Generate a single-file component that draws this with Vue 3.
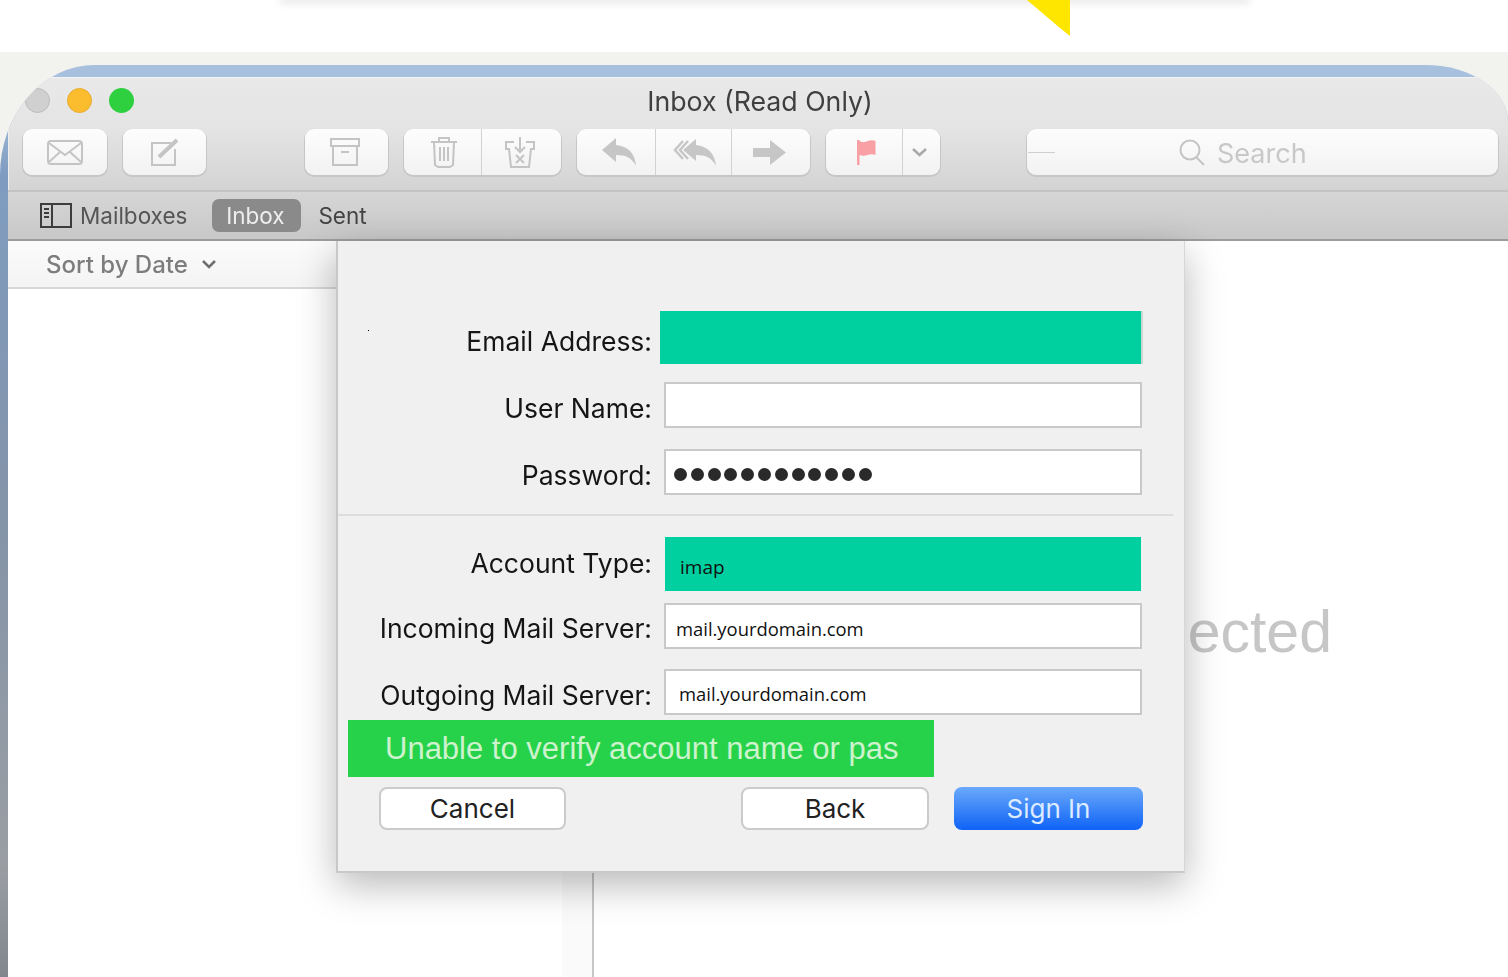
<script setup>
const dots = Array.from({ length: 12 }, (_, i) => i)
</script>

<template>
  <div class="page">
    <div class="top-gap"><div class="paper-edge"></div></div>
    <svg class="corner-mark" width="43" height="36" viewBox="0 0 43 36"><polygon points="0,0 43,0 43,36 33,28" /></svg>
    <div class="desk">
      <div class="window">
        <div class="chrome">
          <div class="titlebar">
            <div class="lights">
              <span class="light gray"></span>
              <span class="light amber"></span>
              <span class="light lime"></span>
            </div>
            <div class="title">Inbox (Read Only)</div>
          </div>
          <div class="toolbar">
            <div class="tool w84">
              <svg width="36" height="25" viewBox="0 0 36 25" class="ico"><rect x="1" y="1" width="34" height="23" rx="3" /><path d="M2 3l16 12L34 3M2 22l11-10M34 22L23 12" /></svg>
            </div>
            <div class="tool w83 ml16">
              <svg width="32" height="30" viewBox="0 0 32 30" class="ico"><path d="M22 6H3v22h23V12" /><path class="thick" d="M10 20L28 3" /></svg>
            </div>
            <div class="tool w83 ml99">
              <svg width="30" height="28" viewBox="0 0 30 28" class="ico shift-l3"><rect x="1" y="1" width="28" height="7" /><path d="M3 8v19h24V8M11 14h8" /></svg>
            </div>
            <div class="tool-group ml16">
              <div class="seg w78">
                <svg width="28" height="32" viewBox="0 0 28 32" class="ico shift-r2"><path d="M1 6h26M9 6V2h10v4M4 6l1 23 3 2h12l3-2 1-23M10 11v14M14 11v14M18 11v14" /></svg>
              </div>
              <div class="seg w79">
                <svg width="32" height="32" viewBox="0 0 32 32" class="ico shift-l3"><path d="M10 6H2v7h3l2 18h18l2-18h3V6h-8M16 1v15M11 11l5 5 5-5M12 19l8 8M20 19l-8 8" /></svg>
              </div>
            </div>
            <div class="tool-group ml16">
              <div class="seg w79">
                <svg width="34" height="28" viewBox="0 0 34 28" class="solid shift-r5"><path d="M0 12L14 0v7c12 1 19 8 20 21-4-8-10-11-20-11v7z" /></svg>
              </div>
              <div class="seg w76">
                <svg width="43" height="28" viewBox="0 0 43 28" class="solid shift-r2"><path d="M10 12L23 1v6c11 1 19 8 20 21-4-8-10-11-20-11v6z" /><path class="chev" d="M10 3L2 12l8 9M15 3l-8 9 8 9" /></svg>
              </div>
              <div class="seg w78">
                <svg width="33" height="25" viewBox="0 0 33 25" class="solid shift-l3"><path d="M0 8h17V0l16 12.500L17 25v-8H0z" /></svg>
              </div>
            </div>
            <div class="tool-group ml16">
              <div class="seg w77">
                <svg width="20" height="25" viewBox="0 0 20 25" class="flag shift-r5"><path d="M0 0h2.500v25H0zM2.500 1c4 2 6 1 8 0 3-1 6-1 8 0v14c-3-1-5-1-8 0-3 1-5 1-8 0z" /></svg>
              </div>
              <div class="seg w37">
                <svg width="15" height="9" viewBox="0 0 15 9" class="down shift-l3"><path d="M1 1l6.500 6L14 1" /></svg>
              </div>
            </div>
            <div class="search">
              <span class="search-dash"></span>
              <svg width="26" height="27" viewBox="0 0 26 27" class="ico search-ico"><circle cx="11" cy="11" r="9.500" /><path d="M17.500 18.500L25 26" /></svg>
              <span class="search-text">Search</span>
            </div>
          </div>
          <div class="tabbar">
            <svg width="32" height="25" viewBox="0 0 32 25" class="side-ico"><rect x="1" y="1" width="30" height="23" /><path d="M12 1v23M4 6h5M4 10h5M4 14h5" /></svg>
            <span class="tab mailboxes">Mailboxes</span>
            <span class="tab pill">Inbox</span>
            <span class="tab sent">Sent</span>
          </div>
        </div>
        <div class="content">
          <div class="list">
            <div class="sort">
              <span>Sort by Date</span>
              <svg width="16" height="10" viewBox="0 0 16 10"><path d="M2 2l6 6 6-6" /></svg>
            </div>
          </div>
          <div class="rail"></div>
          <div class="detail"><span class="empty">ected</span></div>
        </div>
      </div>
    </div>

    <div class="dialog">
      <span class="speck"></span>
      <div class="row first">
        <label class="label nudge">Email Address:</label>
        <div class="field teal email"></div>
      </div>
      <div class="row r18">
        <label class="label nudge">User Name:</label>
        <div class="field"></div>
      </div>
      <div class="row r21">
        <label class="label nudge">Password:</label>
        <div class="field dots">
          <span v-for="d in dots" :key="d" class="dot"></span>
        </div>
      </div>
      <div class="divider"></div>
      <div class="row account">
        <label class="label lift">Account Type:</label>
        <div class="field teal type"><span class="val imap">imap</span></div>
      </div>
      <div class="row r12">
        <label class="label slight">Incoming Mail Server:</label>
        <div class="field"><span class="val in">mail.yourdomain.com</span></div>
      </div>
      <div class="row r20">
        <label class="label nudge">Outgoing Mail Server:</label>
        <div class="field"><span class="val out">mail.yourdomain.com</span></div>
      </div>
      <div class="banner">Unable to verify account name or pas</div>
      <div class="actions">
        <button class="btn cancel">Cancel</button>
        <button class="btn back">Back</button>
        <button class="btn signin">Sign In</button>
      </div>
    </div>
  </div>
</template>

<style scoped>
.page {
  position: relative;
  width: 1508px;
  height: 977px;
  overflow: hidden;
  background: #fff;
  display: flex;
  flex-direction: column;
  font-family: Inter, "Liberation Sans", sans-serif;
}
.top-gap { height: 52px; flex: none; }
.paper-edge {
  width: 966px;
  height: 0;
  margin-left: 282px;
  box-shadow: 0 0 9px 2px rgba(0, 0, 0, 0.17);
}
.corner-mark { position: absolute; left: 1027px; top: 0; }
.corner-mark polygon { fill: #ffe600; }

.desk {
  flex: 1;
  display: flex;
  flex-direction: column;
  background: #f2f2ee;
  padding-top: 13px;
  min-height: 0;
}
.window {
  flex: 1;
  display: flex;
  flex-direction: column;
  min-height: 0;
  overflow: hidden;
  padding: 12px 0 0 8px;
  border-radius: 95px 83px 0 0 / 110px 57px 0 0;
  background: linear-gradient(180deg, #a6c0de 0, #a6c0de 30px, #7f9cc0 110px, #8494a8 450px, #9a9ea3 800px, #7f848a 925px);
}
.chrome {
  flex: none;
  background: linear-gradient(180deg, #e9e9e9 0, #e4e4e4 50px, #d3d3d3 113px);
  border-top: 1px solid #f3f3f3;
  box-shadow: inset 1px 0 0 #eee;
}
.titlebar {
  height: 51px;
  display: grid;
  grid-template-columns: 1fr auto 1fr;
  align-items: center;
  padding: 0 13px 6px 17px;
  box-sizing: border-box;
}
.lights { display: flex; gap: 17px; }
.light {
  width: 25px;
  height: 25px;
  border-radius: 50%;
  box-sizing: border-box;
}
.gray { background: #d0d0d0; border: 1.500px solid #bcbcbc; }
.amber { background: #fbbd2e; border: 1.500px solid #e8ab32; }
.lime { background: #2fd03f; }
.title {
  font-size: 26.700px;
  color: #3f3f3f;
  line-height: 34px;
  filter: blur(0.4px);
}

.toolbar {
  height: 63px;
  box-sizing: border-box;
  padding: 0 0 15px 15px;
  display: flex;
  align-items: stretch;
  border-bottom: 2px solid #c3c3c3;
}
.tool, .tool-group, .search {
  background: linear-gradient(180deg, #fdfdfd 0, #f2f2f2 100%);
  border-radius: 9px;
  box-shadow: 0 1px 0 1px #c6c6c6;
  display: flex;
  align-items: center;
}
.tool { justify-content: center; }
.seg {
  height: 100%;
  display: flex;
  align-items: center;
  justify-content: center;
  box-sizing: border-box;
  border-right: 1px solid #d2d2d2;
}
.seg:last-child { border-right: 0; }
.w84 { width: 84px; }
.w83 { width: 83px; }
.w78 { width: 78px; }
.w79 { width: 79px; }
.w76 { width: 76px; }
.w77 { width: 77px; }
.w37 { width: 37px; }
.ml16 { margin-left: 16px; }
.ml99 { margin-left: 99px; }
.shift-l3 { margin-right: 4px; }
.shift-r2 { margin-left: 2px; }
.shift-r5 { margin-left: 5px; }
.ico { fill: none; stroke: #c4c4c4; stroke-width: 2; }
.ico .thick { stroke-width: 4; }
.solid { fill: #c6c6c6; }
.solid .chev { fill: none; stroke: #c6c6c6; stroke-width: 2.500; }
.flag { fill: #f9a0a4; }
.down { fill: none; stroke: #a9a9a9; stroke-width: 2.500; }
.search {
  margin-left: 87px;
  width: 471px;
  padding-left: 1px;
  box-sizing: border-box;
}
.search-dash {
  width: 27px;
  height: 1px;
  background: #cfcfcf;
  flex: none;
}
.search-ico { margin-left: 124px; }
.search-text {
  margin-left: 12px;
  padding-top: 2px;
  font-size: 27px;
  color: #c8c8c8;
  filter: blur(0.5px);
}

.tabbar {
  height: 49px;
  box-sizing: border-box;
  padding-left: 32px;
  display: flex;
  align-items: center;
  background: linear-gradient(180deg, #d6d6d6 0, #c8c8c8 100%);
  border-bottom: 2px solid #9c9c9c;
}
.side-ico { fill: none; stroke: #3d3d3d; stroke-width: 2; }
.tab { font-size: 22.500px; filter: blur(0.4px); }
.mailboxes { margin-left: 8px; color: #555; }
.pill {
  margin-left: 25px;
  width: 89px;
  height: 33px;
  line-height: 33px;
  text-align: center;
  background: #8a8a8a;
  border-radius: 7px;
  color: #eee;
  box-sizing: border-box;
  padding-right: 3px;
}
.sent { margin-left: 17px; color: #444; }

.content { flex: 1; display: flex; min-height: 0; }
.list { width: 554px; flex: none; background: #fff; }
.sort {
  height: 48px;
  box-sizing: border-box;
  padding-left: 38px;
  display: flex;
  align-items: center;
  gap: 13px;
  background: linear-gradient(180deg, #fbfbfb, #f4f4f4);
  border-bottom: 2px solid #d8d8d8;
  font-size: 24px;
  font-weight: 500;
  color: #7d7d7d;
  filter: blur(0.4px);
}
.sort svg { fill: none; stroke: #6e6e6e; stroke-width: 2.500; }
.rail {
  width: 32px;
  flex: none;
  box-sizing: border-box;
  background: #fafafa;
  border-right: 2px solid #c6c6c6;
}
.detail {
  flex: 1;
  background: #fff;
  display: flex;
  justify-content: flex-end;
  padding: 358px 176px 0 0;
}
.empty {
  font-family: "Liberation Sans", Arial, sans-serif;
  font-size: 59px;
  line-height: 66px;
  height: 66px;
  color: #c6c6c6;
  filter: blur(0.5px);
}

.dialog {
  position: absolute;
  left: 336px;
  top: 241px;
  width: 849px;
  height: 632px;
  box-sizing: border-box;
  background: #f0f0f0;
  border-left: 2px solid #c8c8c8;
  border-right: 1px solid #d6d6d6;
  border-bottom: 2px solid #c9c9c9;
  box-shadow: 0 12px 36px rgba(0, 0, 0, 0.28);
  padding-top: 70px;
}
.speck {
  position: absolute;
  left: 30px;
  top: 89px;
  width: 1px;
  height: 1px;
  background: #000;
}
.row { display: flex; align-items: center; height: 46px; }
.first { height: 53px; }
.r18 { margin-top: 18px; }
.r21 { margin-top: 21px; }
.r12 { margin-top: 12px; }
.r20 { margin-top: 20px; }
.account { margin-top: 21px; height: 54px; }
.label {
  width: 314px;
  flex: none;
  text-align: right;
  font-size: 26.500px;
  line-height: 32px;
  color: #151515;
  filter: blur(0.35px);
}
.nudge { padding-top: 6px; }
.slight { padding-top: 4px; }
.lift { padding-bottom: 2px; }
.field {
  margin-left: 12px;
  width: 478px;
  height: 100%;
  box-sizing: border-box;
  background: #fff;
  border: 2px solid #c9c9c9;
  display: flex;
  align-items: center;
}
.teal { background: #00cf9f; border: 0; }
.email { margin-left: 8px; width: 483px; border-right: 2px solid #c9d8d2; }
.type { margin-left: 13px; width: 476px; }
.val {
  font-family: "Open Sans", sans-serif;
  font-size: 18.400px;
  color: #111;
}
.imap { margin: 6px 0 0 15px; font-size: 19px; }
.in { margin: 4px 0 0 10px; }
.out { margin: 2px 0 0 13px; }
.dots { gap: 3.800px; padding: 4px 0 0 8px; }
.dot {
  width: 13px;
  height: 13px;
  border-radius: 50%;
  background: #2a2a2a;
}
.divider {
  width: 835px;
  height: 2px;
  margin-top: 19px;
  background: #dddddd;
}
.banner {
  margin: 5px 0 0 10px;
  width: 586px;
  height: 57px;
  box-sizing: border-box;
  padding-left: 37px;
  background: #27d24b;
  color: #cdf2cd;
  font-family: "Liberation Sans", Arial, sans-serif;
  font-size: 31px;
  line-height: 57px;
  white-space: nowrap;
}
.actions {
  display: flex;
  margin: 10px 0 0 41px;
  height: 43px;
}
.btn {
  height: 43px;
  box-sizing: border-box;
  border-radius: 8px;
  background: #fff;
  border: 2px solid #cbcbcb;
  font-family: Inter, "Liberation Sans", sans-serif;
  font-size: 26px;
  color: #222;
  padding: 0;
}
.cancel { width: 187px; }
.back { width: 188px; margin-left: 175px; }
.signin {
  width: 189px;
  margin-left: 25px;
  border: 0;
  background: linear-gradient(180deg, #6aa9fb 0, #0f63f6 100%);
  color: #dcebff;
}
</style>

<style>
html, body { margin: 0; background: #fff; overflow: hidden; }
</style>
